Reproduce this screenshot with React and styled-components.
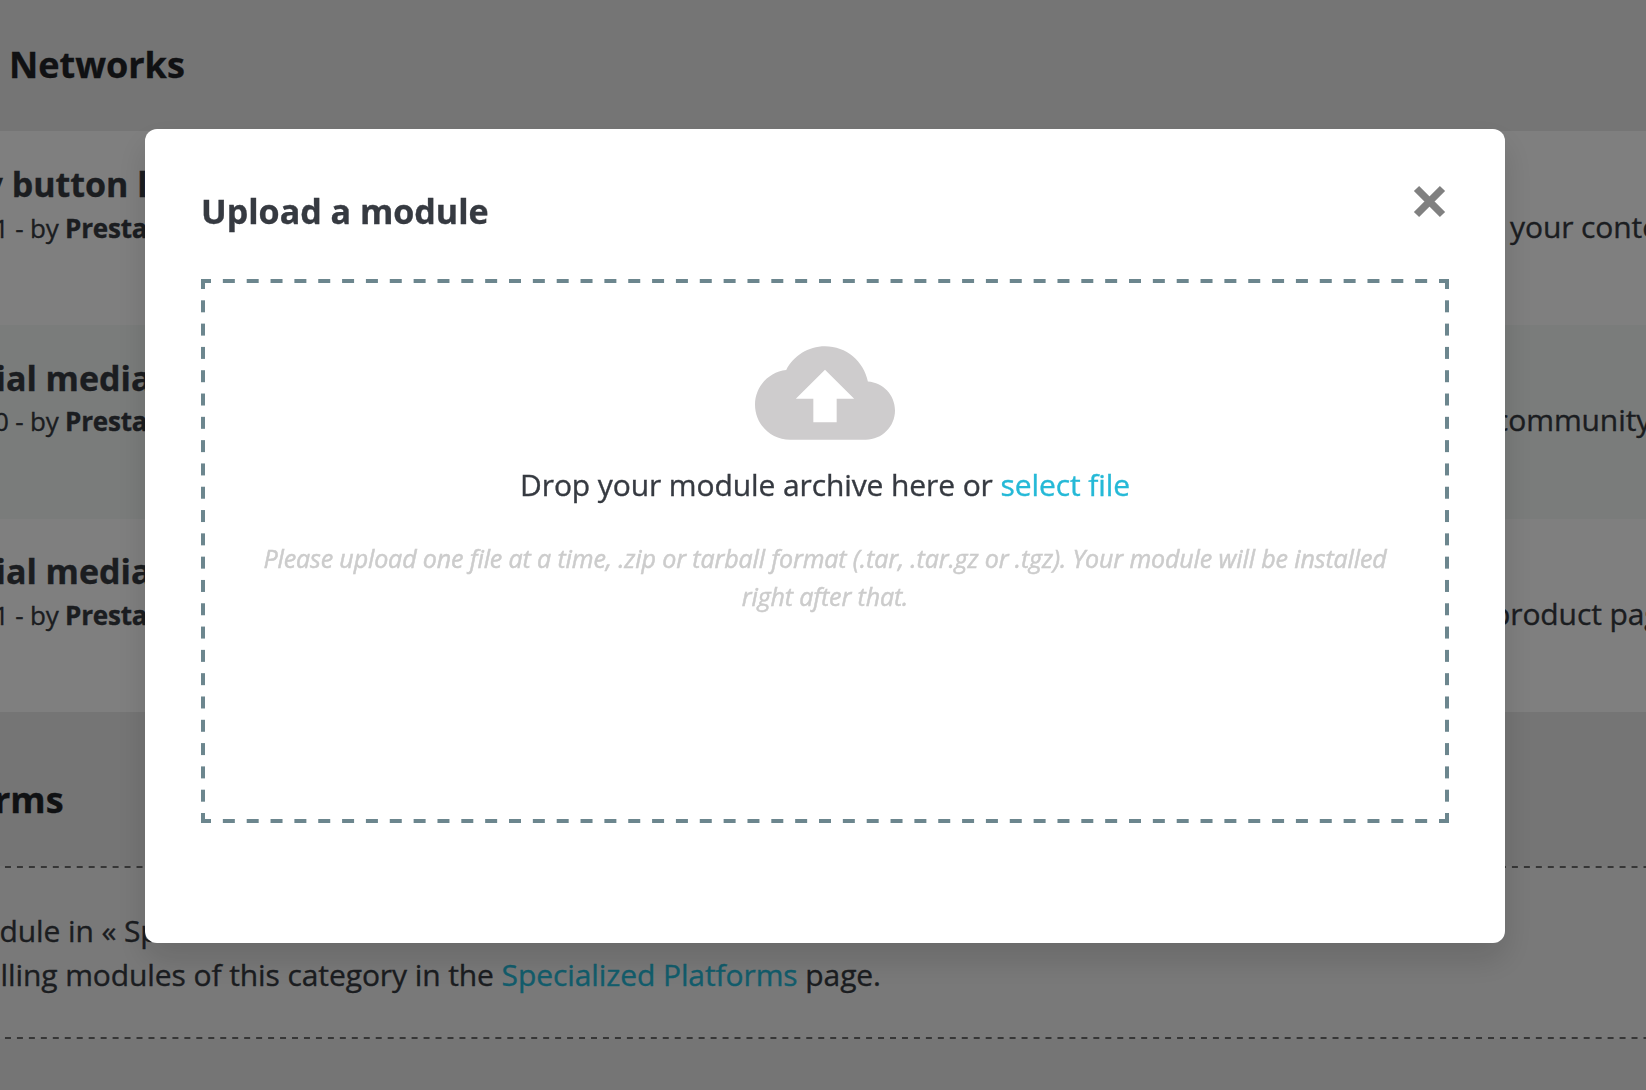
import React from "react";
import styled, { createGlobalStyle } from "styled-components";

const GlobalStyle = createGlobalStyle`
  *, *::before, *::after { box-sizing: border-box; }
  html, body { margin: 0; height: 100%; overflow: hidden; }
  body {
    font-family: "Open Sans", "Noto Sans", sans-serif;
    font-size: 30px;
    letter-spacing: -0.1px;
    -webkit-text-stroke: 0.35px;
    color: #363a41;
    background: #ebebeb;
  }
  h2, h3, p { margin: 0; }
`;

const Page = styled.main`
  display: flex;
  flex-direction: column;
  width: 1646px;
  height: 1090px;
  overflow: hidden;
  background: #ebebeb;
  white-space: nowrap;
`;

const CategoryHeader = styled.header`
  flex: none;
  height: ${(p) => p.$height}px;
  padding-top: ${(p) => p.$top}px;
`;

const CategoryTitle = styled.h2`
  margin-left: ${(p) => p.$shift}px;
  font-size: 36px;
  line-height: 48px;
  font-weight: 700;
  letter-spacing: 0;
  color: #202226;
`;

const ModuleRow = styled.article`
  display: flex;
  justify-content: space-between;
  flex: none;
  height: ${(p) => p.$height}px;
  background: ${(p) => (p.$alt ? "#f5f8f7" : "#ffffff")};
`;

const ModuleInfo = styled.div`
  width: 400px;
  padding-top: ${(p) => p.$top}px;
`;

const ModuleName = styled.h3`
  margin-left: ${(p) => p.$shift}px;
  font-size: 34px;
  line-height: 46px;
  font-weight: 700;
  letter-spacing: 0;
`;

const ModuleMeta = styled.p`
  margin: ${(p) => p.$gap}px 0 0 -6px;
  font-size: 26px;
  line-height: 36px;
  letter-spacing: -0.2px;
`;

const ModuleDescription = styled.p`
  width: ${(p) => p.$width}px;
  padding-top: ${(p) => p.$top}px;
  line-height: 40px;
`;

const dashes = (angle, period, dash, color) => `repeating-linear-gradient(${angle},
  ${color} 0, ${color} ${dash / 2 - 0.5}px,
  transparent ${dash / 2 + 0.5}px, transparent ${period - dash / 2 - 0.5}px,
  ${color} ${period - dash / 2 + 0.5}px, ${color} ${period}px)`;

const EmptyCategory = styled.section`
  flex: none;
  height: 173px;
  padding-top: 43px;
  line-height: 44px;
  letter-spacing: -0.09px;
  background:
    ${dashes("90deg", 11.96, 6, "#6c6c6c")} -4px 0 / 1650px 2px no-repeat,
    ${dashes("90deg", 11.96, 6, "#6c6c6c")} -4px 100% / 1650px 2px no-repeat,
    #f3f3f3;
`;

const EmptyLine = styled.p`
  margin-left: ${(p) => p.$shift}px;
`;

const Link = styled.a`
  color: #25b9d7;
`;

const Backdrop = styled.div`
  position: fixed;
  inset: 0;
  padding: 129px 141px 0 145px;
  background: rgba(0, 0, 0, 0.5);
`;

const Dialog = styled.div`
  width: 1360px;
  height: 814px;
  padding: 56px;
  border-radius: 12px;
  background: #fff;
  box-shadow: 0 16px 32px rgba(0, 0, 0, 0.14);
`;

const DialogHeader = styled.header`
  display: flex;
  justify-content: space-between;
  align-items: flex-start;
  height: 94px;
`;

const DialogTitle = styled.h2`
  padding-top: 2px;
  font-size: 34px;
  line-height: 48px;
  font-weight: 700;
  letter-spacing: 0;
`;

const CloseButton = styled.button`
  display: flex;
  margin: 0 3px 0 0;
  padding: 0;
  border: 0;
  background: none;
  color: #808080;
`;

const DropZone = styled.section`
  display: flex;
  flex-direction: column;
  align-items: center;
  width: 1248px;
  height: 544px;
  padding-top: 40px;
  border: 4px solid transparent;
  background:
    ${dashes("90deg", 1240 / 52, 12, "#6c868e")} 0 -4px / 1240px 4px repeat-x,
    ${dashes("90deg", 1240 / 52, 12, "#6c868e")} 0 536px / 1240px 4px repeat-x,
    ${dashes("180deg", 536 / 23, 12, "#6c868e")} -4px 0 / 4px 536px repeat-y,
    ${dashes("180deg", 536 / 23, 12, "#6c868e")} 1240px 0 / 4px 536px repeat-y;
  text-align: center;
`;

const DropText = styled.p`
  line-height: 44px;
`;

const Hint = styled.p`
  width: 1140px;
  margin-top: 32px;
  font-size: 25px;
  font-style: italic;
  line-height: 38px;
  letter-spacing: -0.12px;
  -webkit-text-stroke: 0.5px;
  color: #cccccc;
`;

const CloudUpload = () => (
  <svg width="140" height="140" viewBox="0 0 24 24" fill="#cecccd">
    <path d="M19.35 10.04C18.67 6.59 15.64 4 12 4 9.11 4 6.6 5.64 5.35 8.04 2.34 8.36 0 10.91 0 14c0 3.31 2.69 6 6 6h13c2.76 0 5-2.24 5-5 0-2.64-2.05-4.78-4.65-4.96zM14 13v4h-4v-4H7l5-5 5 5h-3z" />
  </svg>
);

const Cross = () => (
  <svg width="33" height="33" viewBox="0 0 33 33" stroke="currentColor" strokeWidth="7.4">
    <path d="M3.5 3.5 29.5 29.5M29.5 3.5 3.5 29.5" />
  </svg>
);

const modules = [
  { name: "y button lite", shift: -16.5, top: 30, gap: 3, meta: "1", text: "your content", width: 136, textTop: 76, height: 194 },
  { name: "ial media", shift: -4.5, top: 30, gap: 2, meta: "0", text: "community", width: 152, textTop: 75, height: 194, alt: true },
  { name: "ial media", shift: -4.5, top: 29, gap: 3, meta: "1", text: "product page", width: 154, textTop: 75, height: 193 },
];

export default function App() {
  return (
    <>
      <GlobalStyle />
      <Page>
        <CategoryHeader $height={131} $top={41}>
          <CategoryTitle $shift={9}>Networks</CategoryTitle>
        </CategoryHeader>
        {modules.map((m, i) => (
          <ModuleRow key={i} $alt={m.alt} $height={m.height}>
            <ModuleInfo $top={m.top}>
              <ModuleName $shift={m.shift}>{m.name}</ModuleName>
              <ModuleMeta $gap={m.gap}>
                {m.meta} - by <b>PrestaShop</b>
              </ModuleMeta>
            </ModuleInfo>
            <ModuleDescription $width={m.width} $top={m.textTop}>
              {m.text}
            </ModuleDescription>
          </ModuleRow>
        ))}
        <CategoryHeader $height={154} $top={64}>
          <CategoryTitle $shift={-6}>rms</CategoryTitle>
        </CategoryHeader>
        <EmptyCategory>
          <EmptyLine $shift={-0.5}>dule in « Sp</EmptyLine>
          <EmptyLine $shift={0.5}>
            lling modules of this category in the <Link>Specialized Platforms</Link> page.
          </EmptyLine>
        </EmptyCategory>
      </Page>
      <Backdrop>
        <Dialog role="dialog">
          <DialogHeader>
            <DialogTitle>Upload a module</DialogTitle>
            <CloseButton aria-label="Close">
              <Cross />
            </CloseButton>
          </DialogHeader>
          <DropZone>
            <CloudUpload />
            <DropText>
              Drop your module archive here or <Link>select file</Link>
            </DropText>
            <Hint>
              Please upload one file at a time, .zip or tarball format (.tar, .tar.gz or .tgz). Your module
              will be installed right after that.
            </Hint>
          </DropZone>
        </Dialog>
      </Backdrop>
    </>
  );
}
